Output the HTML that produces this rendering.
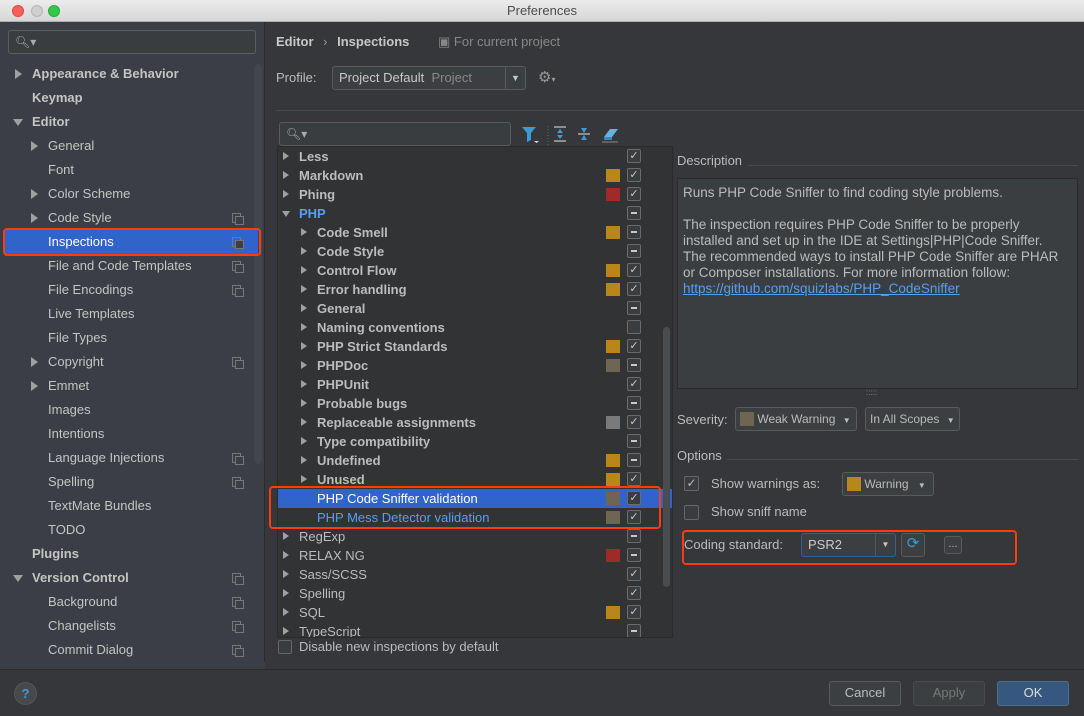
<!DOCTYPE html>
<html><head><meta charset="utf-8"><style>
*{box-sizing:border-box;margin:0;padding:0}
body{width:1084px;height:716px;overflow:hidden;background:#35373a;font-family:"Liberation Sans",sans-serif;font-size:13px;color:#bbbbbb;position:relative}
.abs{position:absolute}
.title{left:0;top:0;width:1084px;height:22px;background:linear-gradient(#ececec,#d6d6d6);border-bottom:1px solid #b0b0b0;text-align:center;color:#4d4d4d;font-size:13px;line-height:22px}
.dot{top:5px;width:12px;height:12px;border-radius:50%}
.side{left:0;top:22px;width:265px;height:647px;background:#3b3f45;border-right:1px solid #2b2b2b}
.si{position:absolute;height:22px;line-height:22px;white-space:nowrap;color:#c4c4c4}
.tri{position:absolute;width:0;height:0;border-left:7px solid #a0a0a0;border-top:5px solid transparent;border-bottom:5px solid transparent}
.trid{position:absolute;width:0;height:0;border-top:7px solid #a0a0a0;border-left:5px solid transparent;border-right:5px solid transparent}
.cp{position:absolute;width:9px;height:10px;border:1px solid #777;}
.cp:after{content:"";position:absolute;left:2px;top:2px;width:7px;height:7px;border:1px solid #777;background:#3b3f45}
.tree{left:277px;top:146px;width:396px;height:492px;background:#313335;overflow:hidden;border:1px solid #2a2a2a}
.tr{position:absolute;left:0;width:395px;height:19px;line-height:19px;font-weight:bold;color:#bcbcbc;white-space:nowrap}
.cb{position:absolute;left:349px;top:2px;width:14px;height:14px;border:1px solid #6b6b6b;border-radius:2px;background:#3a3d3f;font-size:11px;line-height:12px;text-align:center;color:#c8c8c8;font-weight:normal}
.sw{position:absolute;left:328px;top:3px;width:14px;height:13px}
.dash{position:absolute;left:3px;top:5px;width:6px;height:2px;background:#c8c8c8}
.btn{position:absolute;height:24px;border:1px solid #5a5a5a;border-radius:3px;background:#3c3f41;text-align:center;line-height:22px;color:#bbb}
.red{position:absolute;border:2px solid #ff3b14;border-radius:4px}
</style></head><body>
<div class="abs title">Preferences</div>
<div class="abs dot" style="left:12px;background:#fc605b;border:1px solid #de4a43"></div>
<div class="abs dot" style="left:31px;background:#cfcfcf;border:1px solid #b5b5b5"></div>
<div class="abs dot" style="left:48px;background:#34c84a;border:1px solid #27a93a"></div>

<div class="abs side">
 <div class="abs" style="left:8px;top:8px;width:248px;height:24px;border:1px solid #5b5e61;border-radius:3px;background:#3a3d40;color:#aaa;padding-left:6px;line-height:22px;font-size:12px">🔍︎▾</div>
 <div class="abs" style="left:254px;top:42px;width:8px;height:400px;background:#43474c;border-radius:4px"></div>
</div>
<div id="sidelist"></div>

<div class="abs" style="left:276px;top:34px;font-weight:bold;color:#c8c8c8">Editor <span style="font-weight:normal;color:#999;margin:0 6px">›</span> Inspections</div>
<div class="abs" style="left:438px;top:34px;color:#888">▣ For current project</div>
<div class="abs" style="left:276px;top:70px;color:#bbb">Profile:</div>
<div class="abs" style="left:332px;top:66px;width:194px;height:24px;border:1px solid #5a5a5a;border-radius:3px;background:#3c3f41;line-height:22px;padding-left:6px;color:#c8c8c8">Project Default <span style="color:#888">&nbsp;Project</span><span style="position:absolute;right:0;top:0;width:20px;height:22px;border-left:1px solid #5a5a5a;text-align:center;font-size:9px">▼</span></div>
<div class="abs" style="left:538px;top:68px;color:#999;font-size:15px">⚙<span style="font-size:8px">▾</span></div>
<div class="abs" style="left:276px;top:110px;width:808px;height:1px;background:#4a4a4a"></div>
<div class="abs" style="left:279px;top:122px;width:232px;height:24px;border:1px solid #5a5a5a;border-radius:3px;background:#3a3d40;padding-left:6px;line-height:22px;font-size:12px;color:#aaa">🔍︎▾</div>
<svg class="abs" style="left:520px;top:124px" width="110" height="22">
 <path d="M2 3h14l-5 6v7l-4 2v-9z" fill="#3d9ad8"/><path d="M14 17h5l-2.5 2z" fill="#ddd"/>
 <line x1="28" y1="2" x2="28" y2="22" stroke="#666" stroke-dasharray="1 2"/>
 <path d="M34 3h12M34 17h12" stroke="#aaa" stroke-width="1.5"/><path d="M40 5l-3 4h6zM40 15l-3-4h6z" fill="#3d9ad8"/>
 <path d="M58 10h12" stroke="#aaa" stroke-width="1.5"/><path d="M64 9l-3-5h6zM64 11l-3 5h6z" fill="#3d9ad8"/>
 <path d="M84 13l6-8h8l-6 8z" fill="#6ab0de"/><path d="M84 13h8v3h-8z" fill="#3a86c0"/><path d="M82 18h16" stroke="#888"/>
</svg>

<div class="abs tree" id="tree">
 <div class="abs" style="left:385px;top:180px;width:7px;height:260px;background:#4a4d50;border-radius:4px"></div>
</div>
<div class="abs" style="left:278px;top:640px;width:14px;height:14px;border:1px solid #666;border-radius:2px;background:#3a3d3f"></div>
<div class="abs" style="left:299px;top:639px;color:#bbb">Disable new inspections by default</div>

<div class="abs" style="left:677px;top:153px;color:#bbb">Description</div>
<div class="abs" style="left:748px;top:165px;width:330px;height:1px;background:#4a4a4a"></div>
<div class="abs" style="left:677px;top:178px;width:401px;height:211px;background:#3b3e40;border:1px solid #2a2a2a;padding:6px 4px 6px 5px;line-height:16px;color:#bbb;font-size:13.5px;white-space:nowrap;overflow:hidden">Runs PHP Code Sniffer to find coding style problems.<br><br>The inspection requires PHP Code Sniffer to be properly<br>installed and set up in the IDE at Settings|PHP|Code Sniffer.<br>The recommended ways to install PHP Code Sniffer are PHAR<br>or Composer installations. For more information follow:<br><span style="color:#589df6;text-decoration:underline">https://github.com/squizlabs/PHP_CodeSniffer</span></div>
<div class="abs" style="left:866px;top:388px;color:#888;font-size:8px">:::::</div>

<div class="abs" style="left:677px;top:412px">Severity:</div>
<div class="btn" style="left:735px;top:407px;width:122px;text-align:left;padding-left:4px;font-size:12px"><span style="display:inline-block;width:14px;height:14px;background:#6e6652;vertical-align:-3px"></span> Weak Warning <span style="font-size:8px;margin-left:4px">▼</span></div>
<div class="btn" style="left:865px;top:407px;width:95px;font-size:12px;text-align:left;padding-left:4px">In All Scopes <span style="font-size:8px;margin-left:4px">▼</span></div>
<div class="abs" style="left:677px;top:448px">Options</div>
<div class="abs" style="left:727px;top:459px;width:351px;height:1px;background:#4a4a4a"></div>
<div class="abs" style="left:684px;top:476px;width:15px;height:15px;border:1px solid #666;border-radius:2px;background:#3a3d3f;font-size:12px;line-height:13px;text-align:center">✓</div>
<div class="abs" style="left:711px;top:476px">Show warnings as:</div>
<div class="btn" style="left:842px;top:472px;width:92px;font-size:12px;text-align:left;padding-left:4px"><span style="display:inline-block;width:14px;height:14px;background:#b8861b;vertical-align:-3px"></span> Warning <span style="font-size:8px;margin-left:6px">▼</span></div>
<div class="abs" style="left:684px;top:505px;width:15px;height:15px;border:1px solid #666;border-radius:2px;background:#3a3d3f"></div>
<div class="abs" style="left:711px;top:504px">Show sniff name</div>
<div class="abs" style="left:684px;top:537px">Coding standard:</div>
<div class="abs" style="left:801px;top:533px;width:95px;height:24px;border:1px solid #375f8b;border-radius:3px;background:#3c3f41;line-height:22px;padding-left:6px;color:#ccc">PSR2<span style="position:absolute;right:0;top:0;width:20px;height:22px;border-left:1px solid #555;text-align:center;font-size:8px">▼</span></div>
<div class="btn" style="left:901px;top:533px;width:24px;color:#3d9ad8;font-size:15px;line-height:20px">⟳</div>
<div class="btn" style="left:944px;top:536px;width:18px;height:18px;line-height:14px;font-size:11px">...</div>
<div class="red" style="left:682px;top:530px;width:335px;height:35px"></div>

<div class="abs" style="left:0;top:669px;width:1084px;height:1px;background:#2b2b2b"></div>
<div class="abs" style="left:0;top:670px;width:1084px;height:46px;background:#35373a"></div>
<div class="abs" style="left:14px;top:682px;width:23px;height:23px;border-radius:50%;background:#45494c;border:1px solid #555;color:#3d9ad8;text-align:center;line-height:21px;font-weight:bold">?</div>
<div class="btn" style="left:829px;top:681px;width:72px;height:25px">Cancel</div>
<div class="btn" style="left:913px;top:681px;width:72px;height:25px;color:#777;border-color:#4a4a4a">Apply</div>
<div class="btn" style="left:997px;top:681px;width:72px;height:25px;background:#365880;border-color:#4c708c;color:#ddd">OK</div>

<script>
var S=[[32,"Appearance & Behavior",1,1,0,0],[32,"Keymap",1,0,0,0],[32,"Editor",1,2,0,0],[48,"General",0,1,0,0],[48,"Font",0,0,0,0],[48,"Color Scheme",0,1,0,0],[48,"Code Style",0,1,1,0],[48,"Inspections",0,0,1,1],[48,"File and Code Templates",0,0,1,0],[48,"File Encodings",0,0,1,0],[48,"Live Templates",0,0,0,0],[48,"File Types",0,0,0,0],[48,"Copyright",0,1,1,0],[48,"Emmet",0,1,0,0],[48,"Images",0,0,0,0],[48,"Intentions",0,0,0,0],[48,"Language Injections",0,0,1,0],[48,"Spelling",0,0,1,0],[48,"TextMate Bundles",0,0,0,0],[48,"TODO",0,0,0,0],[32,"Plugins",1,0,0,0],[32,"Version Control",1,2,1,0],[48,"Background",0,0,1,0],[48,"Changelists",0,0,1,0],[48,"Commit Dialog",0,0,1,0],[48,"Confirmation",0,0,0,0]];
var h="";S.forEach(function(s,i){var y=63+i*24;if(y>660)return;
if(s[5])h+='<div class="abs" style="left:4px;top:'+(y-2)+'px;width:254px;height:26px;background:#2f65ca"></div>';
if(s[3]==1)h+='<div class="tri" style="left:'+(s[0]-17)+'px;top:'+(y+6)+'px"></div>';
if(s[3]==2)h+='<div class="trid" style="left:'+(s[0]-19)+'px;top:'+(y+8)+'px"></div>';
h+='<div class="si" style="left:'+s[0]+'px;top:'+y+'px;'+(s[2]?'font-weight:bold;':'')+(s[5]?'color:#fff;':'')+'">'+s[1].replace("&","&amp;")+'</div>';
if(s[4])h+='<div class="cp" style="left:232px;top:'+(y+6)+'px"></div>';});
h+='<div class="red" style="left:3px;top:228px;width:258px;height:28px"></div>';
h+='<div class="abs" style="left:0;top:662px;width:265px;height:7px;background:#3b3f45"></div>';
document.getElementById("sidelist").innerHTML=h;
var Y="#b8861b",R="#a02a2a",G="#6e6652",Gr="#7a7a7a";
var T=[[0,"Less",0,"c",1],[0,"Markdown",Y,"c",1],[0,"Phing",R,"c",1],[0,"PHP",0,"d",2],[1,"Code Smell",Y,"d",1],[1,"Code Style",0,"d",1],[1,"Control Flow",Y,"c",1],[1,"Error handling",Y,"c",1],[1,"General",0,"d",1],[1,"Naming conventions",0,"",1],[1,"PHP Strict Standards",Y,"c",1],[1,"PHPDoc",G,"d",1],[1,"PHPUnit",0,"c",1],[1,"Probable bugs",0,"d",1],[1,"Replaceable assignments",Gr,"c",1],[1,"Type compatibility",0,"d",1],[1,"Undefined",Y,"d",1],[1,"Unused",Y,"c",1],[1,"PHP Code Sniffer validation",G,"c",0],[1,"PHP Mess Detector validation",G,"c",0],[0,"RegExp",0,"d",1],[0,"RELAX NG",R,"d",1],[0,"Sass/SCSS",0,"c",1],[0,"Spelling",0,"c",1],[0,"SQL",Y,"c",1],[0,"TypeScript",0,"d",1]];
var t="";T.forEach(function(r,i){var y=0+i*19;var x=r[0]?39:21;
var sel=i==18,blue=i==19||i==3;
t+='<div class="tr" style="top:'+y+'px;'+(sel?'background:#2f65ca;color:#fff;font-weight:normal;':'')+(blue?'color:#589df6;':'')+(i>=18&&!sel?'font-weight:normal;':'')+'">';
if(r[4]==1)t+='<div class="tri" style="left:'+(x-16)+'px;top:5px;border-left-width:6px;border-top-width:4px;border-bottom-width:4px"></div>';
if(r[4]==2)t+='<div class="trid" style="left:'+(x-17)+'px;top:7px;border-top-width:6px;border-left-width:4px;border-right-width:4px"></div>';
t+='<span style="position:absolute;left:'+x+'px">'+r[1]+'</span>';
if(r[2])t+='<div class="sw" style="background:'+r[2]+'"></div>';
t+='<div class="cb">'+(r[3]=="c"?"✓":"")+(r[3]=="d"?'<div class="dash"></div>':"")+'</div></div>';});
var tr=document.getElementById("tree");tr.insertAdjacentHTML("afterbegin",t);
document.body.insertAdjacentHTML("beforeend",'<div class="red" style="left:269px;top:486px;width:392px;height:43px"></div>');
</script>
</body></html>
